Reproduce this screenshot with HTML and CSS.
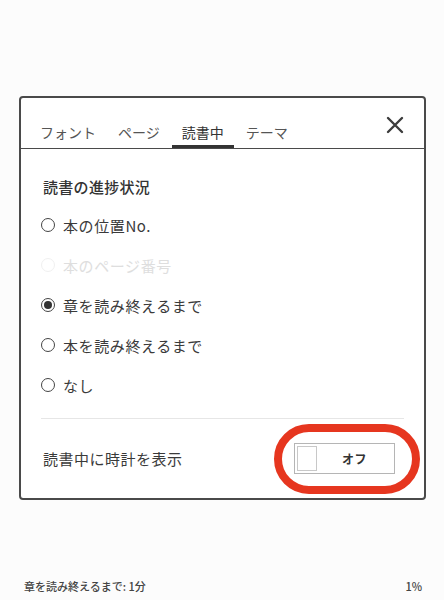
FILE: index.html
```html
<!DOCTYPE html>
<html lang="ja">
<head>
    <meta charset="UTF-8">
    <meta name="viewport" content="width=device-width, initial-scale=1.0">
    <title>表示設定</title>
    <link rel="stylesheet" href="styles.css">
</head>
<body>
    <div class="screen">
        <div class="dialog">
            <div class="tabs">
                <span class="tab">フォント</span>
                <span class="tab">ページ</span>
                <span class="tab active">読書中</span>
                <span class="tab">テーマ</span>
                <button class="close" aria-label="閉じる">
                    <svg width="18" height="18" viewBox="0 0 18 18">
                        <path d="M2 2 L16 16 M16 2 L2 16" stroke="#3c3c3c" stroke-width="2.4" stroke-linecap="round" fill="none"/>
                    </svg>
                </button>
            </div>
            <div class="panel">
                <h2>読書の進捗状況</h2>
                <ul class="options">
                    <li class="option"><span class="radio"></span>本の位置No.</li>
                    <li class="option disabled"><span class="radio"></span>本のページ番号</li>
                    <li class="option"><span class="radio checked"></span>章を読み終えるまで</li>
                    <li class="option"><span class="radio"></span>本を読み終えるまで</li>
                    <li class="option"><span class="radio"></span>なし</li>
                </ul>
                <div class="divider"></div>
                <div class="setting-row">
                    <span>読書中に時計を表示</span>
                    <div class="toggle">
                        <span class="knob"></span>
                        <span class="toggle-label">オフ</span>
                        <span class="highlight"></span>
                    </div>
                </div>
            </div>
        </div>
        <footer class="status">
            <span>章を読み終えるまで: 1分</span>
            <span>1%</span>
        </footer>
    </div>
</body>
</html>
```

FILE: styles.css
```css
* {
    margin: 0;
    padding: 0;
    box-sizing: border-box;
}

body {
    width: 444px;
    height: 600px;
    background: #fcfcfc;
    font-family: "Noto Sans CJK JP", "Noto Sans", sans-serif;
    color: #333;
}

.screen {
    height: 600px;
    display: flex;
    flex-direction: column;
    padding-top: 96px;
}

.dialog {
    margin-left: 19px;
    width: 407px;
    height: 404px;
    border: 2px solid #4a4a4a;
    border-radius: 4px;
    background: #fff;
}

.tabs {
    height: 51px;
    display: flex;
    align-items: flex-end;
    gap: 2px;
    padding-left: 9px;
    border-bottom: 1px solid #4a4a4a;
    position: relative;
}

.tab {
    padding: 0 10px 3px;
    line-height: 20px;
    font-size: 14px;
    color: #555;
    border-bottom: 3px solid transparent;
}

.tab.active {
    color: #333;
    border-bottom-color: #333;
}

.close {
    position: absolute;
    right: 20px;
    top: 18px;
    border: none;
    background: none;
    width: 18px;
    height: 18px;
}

.panel {
    padding: 27px 20px 0 20px;
}

h2 {
    font-size: 15px;
    font-weight: 500;
    line-height: 22px;
    letter-spacing: 0.3px;
    color: #333;
    padding-left: 2px;
}

.options {
    list-style: none;
    margin-top: 7px;
}

.option {
    height: 40px;
    display: flex;
    align-items: center;
    gap: 8px;
    font-size: 15px;
    letter-spacing: 0.6px;
    color: #3a3a3a;
}

.option.disabled {
    color: #dedede;
}

.radio {
    width: 14px;
    height: 14px;
    border: 1.3px solid #444;
    border-radius: 50%;
    display: flex;
    align-items: center;
    justify-content: center;
}

.option.disabled .radio {
    border-color: #f0f0f0;
}

.radio.checked::after {
    content: '';
    width: 8px;
    height: 8px;
    border-radius: 50%;
    background: #333;
}

.divider {
    margin-top: 13px;
    height: 1px;
    background: #e6e6e6;
}

.setting-row {
    margin-top: 24px;
    display: flex;
    justify-content: space-between;
    align-items: center;
    padding: 0 9px 0 2px;
    font-size: 15px;
    letter-spacing: 0.5px;
    color: #3a3a3a;
}

.toggle {
    position: relative;
    width: 101px;
    height: 31px;
    border: 1px solid #b5b5b5;
    display: flex;
    align-items: center;
    padding: 2px;
}

.knob {
    width: 20px;
    height: 100%;
    border: 1px solid #c8c8c8;
}

.toggle-label {
    flex: 1;
    text-align: center;
    font-size: 12px;
    font-weight: 700;
    color: #333;
}

.highlight {
    position: absolute;
    left: -21px;
    top: -20px;
    width: 146px;
    height: 70px;
    border: 8px solid #e6361f;
    border-radius: 36px;
}

.status {
    margin-top: auto;
    height: 22px;
    display: flex;
    justify-content: space-between;
    padding: 0 22px 0 24px;
    font-size: 11px;
    font-weight: 500;
    color: #444;
}
```
